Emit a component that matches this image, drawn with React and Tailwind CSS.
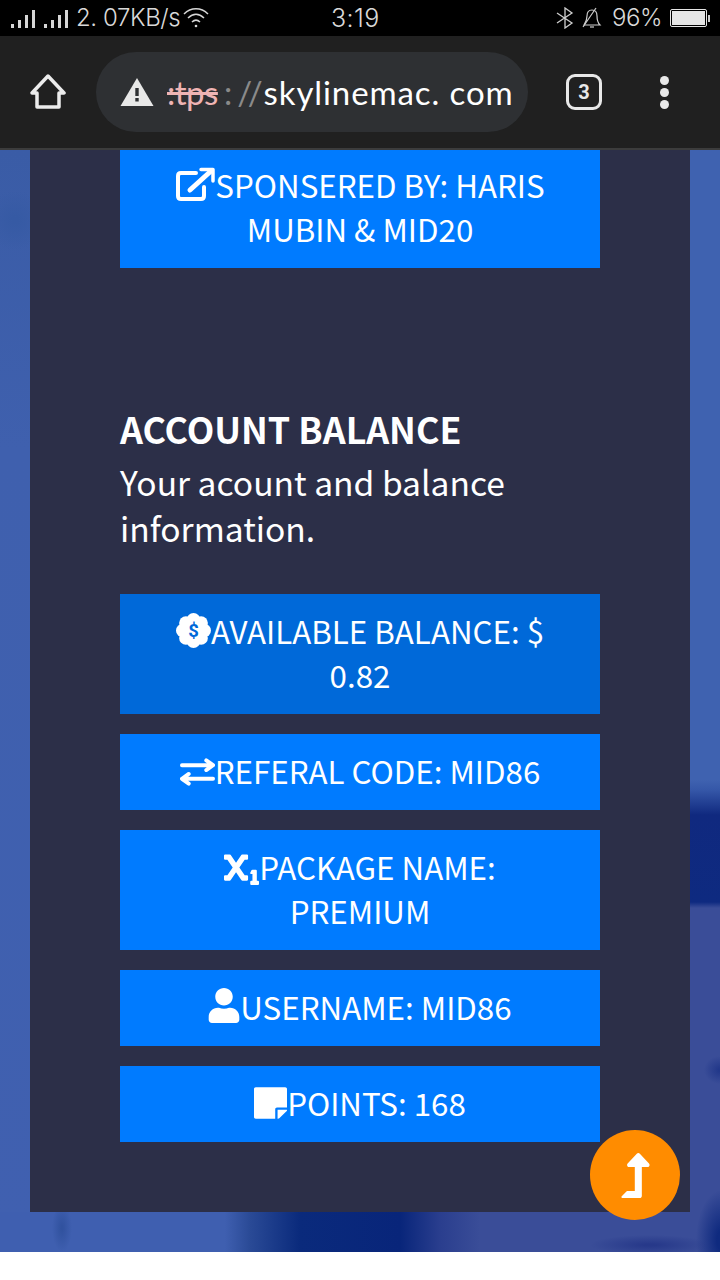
import React from "react";
import { FaSubscript, FaUser, FaStickyNote, FaLevelUpAlt } from "react-icons/fa";

const SANS = "font-['Noto_Sans_CJK_SC','Noto_Sans',sans-serif]";

function Signal({ className }) {
  return (
    <svg viewBox="0 0 26 18" className={className} fill="#d6d6d6">
      <rect x="0" y="14" width="3" height="4" />
      <rect x="7" y="10" width="3" height="8" />
      <rect x="14" y="5" width="3" height="13" />
      <rect x="21" y="0" width="3" height="18" />
    </svg>
  );
}

function StatusBar() {
  return (
    <div className="h-[36px] bg-black flex items-center pl-[11px] text-[#d9d9d9] font-['Inter',sans-serif] font-light">
      <Signal className="w-[26px] h-[18px] mt-[1px]" />
      <Signal className="w-[26px] h-[18px] mt-[1px] ml-[7px]" />
      <span className="ml-[6px] text-[24px] leading-[36px] tracking-[-0.4px] w-[110px] whitespace-nowrap">2. 07KB/s</span>
      <svg viewBox="0 0 26 22" className="w-[26px] h-[22px] ml-[-3px]" fill="none" stroke="#d6d6d6" strokeWidth="1.5">
        <path d="M1 7 C8 0 18 0 25 7" />
        <path d="M5 11 C10 6 16 6 21 11" />
        <path d="M9 15 C11.5 12.5 14.500 12.500 17 15" />
        <circle cx="13" cy="19" r="1.300" fill="#d6d6d6" stroke="none" />
      </svg>
      <span className="ml-[122px] text-[25px] leading-[36px] tracking-[0.4px] w-[80px]">3:19</span>
      <svg viewBox="0 0 18 22" className="ml-[145px] w-[18px] h-[22px]" fill="none" stroke="#cfcfcf" strokeWidth="1.3">
        <path d="M1 6 L16 16 L9 21 V1 L16 6 L1 16" />
      </svg>
      <svg viewBox="0 0 20 22" className="ml-[8px] w-[20px] h-[22px]" fill="none" stroke="#cfcfcf" strokeWidth="1.2">
        <path d="M2 18 H18 C15 15 15 12 15 9 C15 5 13 3 10 3 C7 3 5 5 5 9 C5 13 4 15 2 18Z" />
        <path d="M1 20 L14 1" />
        <path d="M8 20 H12" />
      </svg>
      <span className="ml-[10px] text-[24px] leading-[36px] tracking-[-0.5px] w-[58px]">96%</span>
      <div className="w-[37px] h-[18px] border border-[#e6e6e6] rounded-[2px] p-[1px]">
        <div className="h-full bg-[#e6e6e6]" />
      </div>
      <div className="w-[2px] h-[7px] bg-[#cfcfcf] ml-[1px]" />
    </div>
  );
}

function Toolbar() {
  return (
    <div className="h-[114px] bg-[#202020] border-b-2 border-[#3c3c3c] flex items-center">
      <svg viewBox="0 0 36 36" className="ml-[30px] w-[36px] h-[36px]" fill="none" stroke="#ececec" strokeWidth="3.500" strokeLinejoin="round" strokeLinecap="round">
        <path d="M2 19 L18 2 L34 19 H29 V33 H7 V19 Z" />
      </svg>
      <div className="ml-[30px] w-[432px] h-[80px] rounded-[40px] bg-[#2e3033] flex items-center pl-[24px]">
        <svg viewBox="0 0 34 30" className="w-[34px] h-[30px]">
          <path d="M17 1 L33.500 29 H0.500 Z" fill="#e8e8e8" />
          <rect x="15.300" y="11" width="3.400" height="8" fill="#2e3033" />
          <rect x="15.300" y="21" width="3.400" height="3.500" fill="#2e3033" />
        </svg>
        <span className="ml-[13px] text-[33px] leading-[40px] font-['Lato',sans-serif] whitespace-nowrap flex items-baseline">
          <span className="text-[#efb4b4] line-through tracking-[-0.5px]">:tps</span>
          <span className="text-[#8a8a8a] ml-[6px]">:</span>
          <span className="text-[#8a8a8a] ml-[5px] tracking-[3px]">//</span>
          <span className="text-white tracking-[0.9px] ml-[-2px]">skylinemac. com</span>
        </span>
      </div>
      <div className="ml-[38px] w-[36px] h-[36px] rounded-[9px] border-[3px] border-[#e8e8e8] flex items-center justify-center text-[#e8e8e8] text-[20px] font-bold font-['Roboto',sans-serif]">
        3
      </div>
      <div className="ml-[58px] flex flex-col gap-[3px]">
        <div className="w-[9px] h-[9px] rounded-full bg-[#e8e8e8]" />
        <div className="w-[9px] h-[9px] rounded-full bg-[#e8e8e8]" />
        <div className="w-[9px] h-[9px] rounded-full bg-[#e8e8e8]" />
      </div>
    </div>
  );
}

function ExternalIcon() {
  return (
    <svg viewBox="0 0 40 36" className="inline-block w-[40px] h-[36px] align-[-5px]" fill="none" stroke="white" strokeWidth="4" strokeLinecap="round" strokeLinejoin="round">
      <path d="M21 6 H6 Q3 6 3 9 V29 Q3 32 6 32 H26 Q29 32 29 29 V20" />
      <path d="M15 23 L36 4" strokeWidth="5" />
      <path d="M26 2.500 H38 V14" strokeWidth="3.500" />
    </svg>
  );
}

function BadgeIcon() {
  const pts = [0, 45, 90, 135, 180, 225, 270, 315];
  return (
    <svg viewBox="0 0 36 36" className="inline-block w-[35px] h-[35px] align-[-4px]">
      {pts.map((a) => (
        <circle key={a} cx={18 + 11 * Math.cos((a * Math.PI) / 180)} cy={18 + 11 * Math.sin((a * Math.PI) / 180)} r="7" fill="white" />
      ))}
      <circle cx="18" cy="18" r="12" fill="white" />
      <text x="18" y="24.500" textAnchor="middle" fontSize="19" fontWeight="700" fill="#0069d9" fontFamily="Roboto, sans-serif">$</text>
    </svg>
  );
}

function TransferIcon() {
  return (
    <svg viewBox="0 0 36 28" className="inline-block w-[35px] h-[28px] align-[-2px]" fill="none" stroke="white" strokeWidth="4" strokeLinecap="round" strokeLinejoin="round">
      <path d="M2 7 H34 M27 2 L34 7 L27 12" />
      <path d="M34 21 H2 M9 16 L2 21 L9 26" />
    </svg>
  );
}

function Btn({ children, dark }) {
  return (
    <div className={`px-[40px] pt-[15px] pb-[17px] text-center text-white text-[31.3px] leading-[44px] ${dark ? "bg-[#0069d9]" : "bg-[#007bff]"}`}>
      {children}
    </div>
  );
}

export default function App() {
  return (
    <div className="w-[720px] h-[1280px] bg-white overflow-hidden flex flex-col">
      <StatusBar />
      <Toolbar />
      <main
        className={`relative h-[1102px] overflow-hidden ${SANS} [background:radial-gradient(ellipse_60px_10px_at_650px_1095px,#27398a_10%,transparent_100%)_no-repeat,radial-gradient(ellipse_26px_50px_at_722px_1090px,#0f2a7f_20%,transparent_100%)_no-repeat,radial-gradient(ellipse_10px_24px_at_62px_1078px,#31529f_10%,transparent_100%)_no-repeat,linear-gradient(90deg,#3f5fb0_0px,#3f5fb0_225px,#2a4a96_250px,#0a2a7c_300px,#08257a_400px,#2a3e8e_440px,#3a4d98_480px,#3a4d98_720px)_0_100%/720px_40px_no-repeat,radial-gradient(ellipse_16px_14px_at_720px_920px,#22388a_10%,transparent_100%)_no-repeat,linear-gradient(180deg,#3f62b0_0px,#3f62b0_630px,#3557a8_640px,#10297f_665px,#0e2a80_752px,#3a4d98_758px,#3a4d98_1102px)_100%_0/30px_1102px_no-repeat,radial-gradient(ellipse_30px_30px_at_15px_70px,#365aa4_10%,transparent_100%)_no-repeat,linear-gradient(180deg,#3a5ca6_0px,#3f60ae_300px,#4060b0_1102px)]`}
      >
        <div className="mx-[30px] h-[1064px] bg-[#2c2f48] px-[90px]">
          <div className="-mt-[2px] flex flex-col">
            <Btn>
              <ExternalIcon />
              SPONSERED BY: HARIS MUBIN &amp; MID20
            </Btn>
          </div>
          <h2 className="mt-[134px] text-white text-[35.8px] leading-[52px] font-bold">ACCOUNT BALANCE</h2>
          <p className="mt-[5px] text-white text-[33.6px] leading-[46px]">Your acount and balance information.</p>
          <div className="mt-[43px] flex flex-col gap-[20px]">
            <Btn dark>
              <BadgeIcon />
              AVAILABLE BALANCE: $ 0.82
            </Btn>
            <Btn>
              <TransferIcon />
              REFERAL CODE: MID86
            </Btn>
            <Btn>
              <FaSubscript className="inline-block w-[35px] h-[35px] align-[-5px]" />
              PACKAGE NAME: PREMIUM
            </Btn>
            <Btn>
              <FaUser className="inline-block w-[32px] h-[35px] align-[-3px]" />
              USERNAME: MID86
            </Btn>
            <Btn>
              <FaStickyNote preserveAspectRatio="none" className="inline-block w-[33px] h-[36px] align-[-5px]" />
              POINTS: 168
            </Btn>
          </div>
        </div>
        <div className="absolute left-[590px] top-[980px] w-[90px] h-[90px] rounded-full bg-[#ff8c00] flex items-center justify-center">
          <FaLevelUpAlt className="text-white w-[45px] h-[45px]" />
        </div>
      </main>
    </div>
  );
}
